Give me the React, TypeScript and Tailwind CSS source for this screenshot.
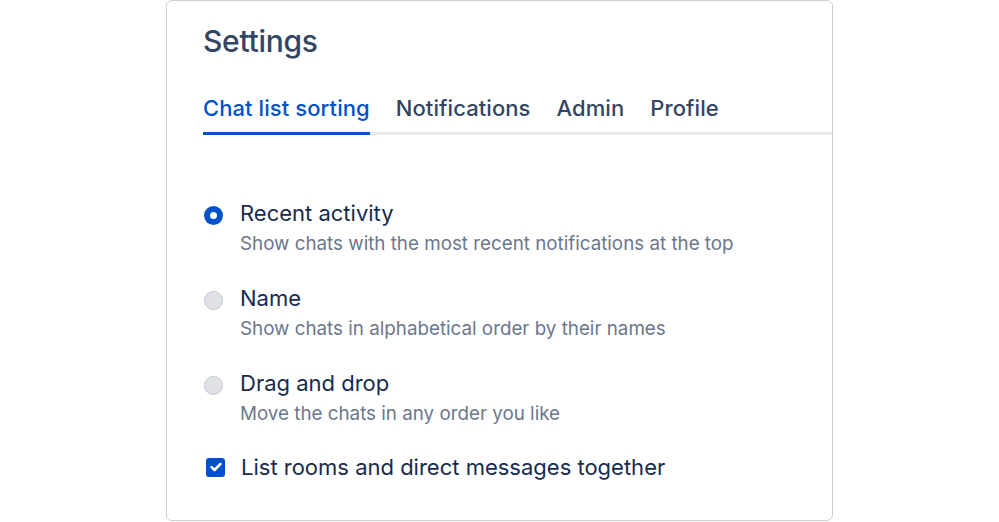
import { FC } from "react";

const tabs = ["Chat list sorting", "Notifications", "Admin", "Profile"];

const options = [
  {
    label: "Recent activity",
    hint: "Show chats with the most recent notifications at the top",
    checked: true,
  },
  {
    label: "Name",
    hint: "Show chats in alphabetical order by their names",
    checked: false,
  },
  {
    label: "Drag and drop",
    hint: "Move the chats in any order you like",
    checked: false,
  },
];

// ---------------- Radio ----------------
const Radio: FC<{ checked: boolean }> = ({ checked }) =>
  checked ? (
    <span className="grid h-[19px] w-[19px] shrink-0 place-items-center rounded-full bg-[#0052cc]">
      <span className="block h-[7px] w-[7px] rounded-full bg-white" />
    </span>
  ) : (
    <span className="block h-[19px] w-[19px] shrink-0 rounded-full border-[1.5px] border-[#c1c7d0] bg-[#dfe1e6]" />
  );

// ---------------- Checkbox ----------------
const Checkbox = () => (
  <span className="grid h-[19px] w-[19px] shrink-0 place-items-center rounded-[3px] bg-[#0052cc]">
    <svg width="12" height="10" viewBox="0 0 12 10" fill="none">
      <path
        d="M1.6 5.2L4.5 8L10.4 2"
        stroke="white"
        strokeWidth="2.5"
        strokeLinecap="round"
        strokeLinejoin="round"
      />
    </svg>
  </span>
);

export default function App() {
  return (
    <div className="flex min-h-screen justify-center bg-white font-['Inter',sans-serif]">
      <div className="flex h-[521px] w-[667px] flex-col rounded-[6px] border border-[#cfcfcf] pl-[36px] pt-[22px]">
        <h1 className="text-[30px] font-medium leading-[36px] tracking-[-0.3px] text-[#344563]">
          Settings
        </h1>

        {/* tabs */}
        <div className="mt-[36px] flex gap-[26px] border-b-[3px] border-[#ebecf0]">
          {tabs.map((tab, i) => (
            <div
              key={tab}
              className={`-mb-[3px] border-b-[3px] pb-[11px] text-[22px] font-medium leading-[26px] tracking-[0.08px] ${
                i === 0
                  ? "border-[#0052cc] text-[#0052cc]"
                  : "border-transparent text-[#344563]"
              }`}
            >
              {tab}
            </div>
          ))}
        </div>

        {/* sorting options */}
        <div className="mt-[65px] flex flex-col gap-[29px]">
          {options.map((opt) => (
            <label key={opt.label} className="flex items-start gap-[17px] pl-[1px]">
              <span className="mt-[6px] block">
                <Radio checked={opt.checked} />
              </span>
              <span className="flex flex-col gap-[6px]">
                <span className="text-[22px] leading-[26px] text-[#172b4d]">
                  {opt.label}
                </span>
                <span className="text-[18.8px] leading-[24px] text-[#6b778c]">
                  {opt.hint}
                </span>
              </span>
            </label>
          ))}
          <label className="-mt-[1px] flex items-center gap-[16px] pl-[3px]">
            <Checkbox />
            <span className="text-[22px] leading-[26px] text-[#172b4d]">
              List rooms and direct messages together
            </span>
          </label>
        </div>
      </div>
    </div>
  );
}
